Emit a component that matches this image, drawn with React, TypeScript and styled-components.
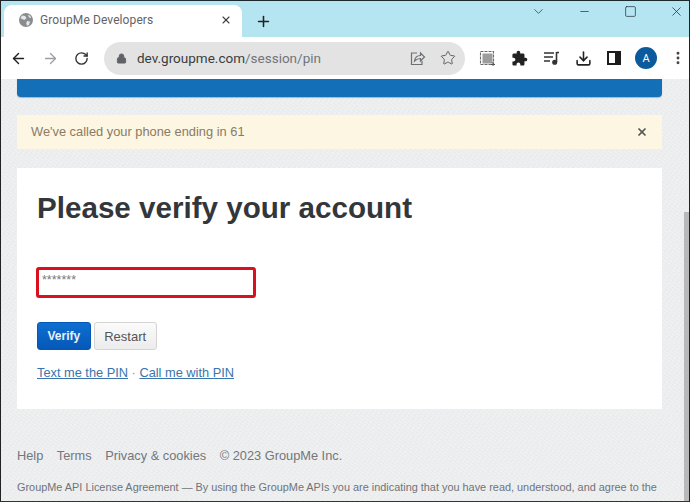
import React from "react";
import styled, { createGlobalStyle } from "styled-components";
import { ArrowLeft, ArrowRight, RotateCw, Lock, Star, Plus, X, Minus, ChevronDown, Square, Download, EllipsisVertical } from "lucide-react";

const Global = createGlobalStyle`
  html, body { margin: 0; padding: 0; height: 502px; overflow: hidden; }
  body { font-family: "Liberation Sans", Arial, sans-serif; }
  * { box-sizing: border-box; }
`;

const Frame = styled.div`
  width: 690px;
  height: 502px;
  display: flex;
  flex-direction: column;
  overflow: hidden;
  border-top: 1px solid #1c2a30;
  border-left: 1px solid #222;
  border-right: 1px solid #222;
  border-bottom: 1px solid #333;
`;

const TabStrip = styled.div`
  height: 36px;
  flex: none;
  background: #b5e5f0;
  display: flex;
  align-items: flex-end;
  padding-left: 3px;
  position: relative;
`;

const Tab = styled.div`
  width: 238px;
  height: 32px;
  background: #fff;
  border-radius: 8px 8px 0 0;
  display: flex;
  align-items: center;
  padding: 0 0 2px 15px;
  color: #5f6368;
  font: 12px "Roboto", "Liberation Sans", sans-serif;
`;

const TabTitle = styled.span`
  margin-left: 7px;
  flex: 1;
  letter-spacing: 0.1px;
`;

const TabClose = styled.span`
  display: flex;
  margin-right: 10px;
  color: #3c4043;
`;

const NewTab = styled.div`
  width: 20px;
  height: 32px;
  margin-left: 13px;
  display: flex;
  align-items: center;
  color: #202124;
`;

const WindowButtons = styled.div`
  position: absolute;
  top: 0;
  right: 5px;
  height: 20px;
  display: flex;
  align-items: center;
  gap: 30px;
  color: #2b3a40;
`;

const WindowButton = styled.div`
  width: 16px;
  display: flex;
  justify-content: center;
`;

const Toolbar = styled.div`
  height: 42px;
  flex: none;
  background: #fff;
  display: flex;
  align-items: center;
  padding-left: 9px;
  color: #3c4043;
`;

const NavIcons = styled.div`
  display: flex;
  align-items: center;
  gap: 15px;
  width: 94px;
`;

const Omnibox = styled.div`
  width: 361px;
  height: 33px;
  border-radius: 17px;
  background: #e3e3e4;
  display: flex;
  align-items: center;
  padding: 0 9px 0 12px;
  color: #5f6368;
`;

const Url = styled.div`
  flex: 1;
  margin-left: 10px;
  font: 13.5px "Roboto", "Liberation Sans", sans-serif;
  color: #70757a;
  b {
    font-weight: 400;
    color: #3a3d40;
  }
`;

const OmniIcons = styled.div`
  display: flex;
  align-items: center;
  gap: 14px;
`;

const ExtIcons = styled.div`
  display: flex;
  align-items: center;
  margin-left: 14px;
  gap: 15px;
  color: #222;
`;

const Avatar = styled.div`
  width: 22px;
  height: 22px;
  margin-left: -1px;
  margin-right: -2px;
  border-radius: 50%;
  background: #0b5a9e;
  color: #fff;
  font: 11px "Roboto", "Liberation Sans", sans-serif;
  display: flex;
  align-items: center;
  justify-content: center;
`;

const Viewport = styled.div`
  flex: 1;
  min-height: 0;
  display: flex;
  background-color: #ecedee;
  background-image: repeating-linear-gradient(37deg, rgba(255, 255, 255, 0.22) 0 1px, transparent 1px 3px),
    repeating-linear-gradient(-52deg, rgba(0, 0, 0, 0.012) 0 1px, transparent 1px 4px);
`;

const Page = styled.div`
  width: 677px;
  padding: 0 16px;
  display: flex;
  flex-direction: column;
`;

const Bar = styled.div`
  height: 18px;
  flex: none;
  background: #146fb9;
  border-radius: 0 0 4px 4px;
  box-shadow: 0 1px 1px rgba(0, 0, 0, 0.25);
`;

const Notice = styled.div`
  height: 34px;
  flex: none;
  margin-top: 18px;
  background: #fdf6e3;
  display: flex;
  align-items: center;
  justify-content: space-between;
  padding: 0 14px 1px;
  color: #8a7b64;
  font-size: 12.85px;
`;

const CloseMark = styled.span`
  color: #555;
  display: flex;
`;

const Card = styled.div`
  height: 241px;
  flex: none;
  margin-top: 19px;
  background: #fff;
  padding: 22px 20px 0;
`;

const Heading = styled.h1`
  margin: 0;
  font-size: 29.6px;
  line-height: 36px;
  font-weight: 700;
  color: #33373b;
`;

const PinInput = styled.div`
  width: 220px;
  height: 31px;
  margin: 41px 0 0 -1px;
  border: 3px solid #d9101f;
  border-radius: 3px;
  padding: 3px 0 0 3px;
  color: #777;
  font-size: 12.5px;
  line-height: 14px;
`;

const Buttons = styled.div`
  display: flex;
  gap: 3px;
  margin-top: 24px;
`;

const Button = styled.div<{ $primary?: boolean }>`
  height: 28px;
  padding: 0 9.5px;
  border-radius: 3px;
  display: flex;
  align-items: center;
  font-size: ${(p) => (p.$primary ? "12px" : "13px")};
  color: ${(p) => (p.$primary ? "#e8f1fb" : "#555")};
  font-weight: ${(p) => (p.$primary ? 700 : 400)};
  background: ${(p) => (p.$primary ? "linear-gradient(#0e6fd0, #0558b8)" : "linear-gradient(#fbfbfb, #ececec)")};
  border: 1px solid ${(p) => (p.$primary ? "#0558b8" : "#d4d4d4")};
`;

const Links = styled.div`
  margin-top: 15px;
  font-size: 12.8px;
  line-height: 16px;
  color: #8a9aa8;
`;

const PinLink = styled.a`
  color: #3a74ac;
  text-decoration: underline;
`;

const Footer = styled.div`
  margin-top: 39px;
  display: flex;
  gap: 13.5px;
  font-size: 12.8px;
  line-height: 16px;
  color: #72777c;
  white-space: nowrap;
`;

const License = styled.div`
  margin-top: 17px;
  font-size: 10.9px;
  line-height: 13px;
  color: #6f7479;
  white-space: nowrap;
`;

const Scrollbar = styled.div`
  flex: 1;
  padding: 133px 0 0 6px;
  display: flex;
`;

const Thumb = styled.div`
  flex: 1;
  background: #b9b9b9;
`;

const Globe = () => (
  <svg width="14" height="14" viewBox="0 0 14 14">
    <circle cx="7" cy="7" r="7" fill="#8a8d90" />
    <path d="M3 2.5l3 .5 1.5 2-2 2L3 6 1.5 5zM8 8l3 .5-1 3.5-2 .8-.8-2.5zM9 1.5l2.5 1.5.5 2-2-.5z" fill="#e6e7e8" />
  </svg>
);

const ShareIcon = () => (
  <svg width="17" height="17" viewBox="0 0 17 17" fill="none" stroke="#6d7074" strokeWidth="1.2">
    <path d="M8 3H2.5v11.5H13V11" />
    <path d="M5.5 11c.5-3.5 3-5.5 6-5.5V3l4 4-4 4V8.5c-2.5 0-4.5 1-6 2.5z" />
  </svg>
);

const ScreenshotIcon = () => (
  <svg width="17" height="17" viewBox="0 0 17 17" fill="none">
    <rect x="3.5" y="3.5" width="10" height="10" fill="#9c9c9c" />
    <rect x="1.5" y="1.5" width="13" height="13" stroke="#6a6a6a" strokeWidth="1.1" strokeDasharray="3 1" />
    <path d="M14 12v4M12 14.5h4" stroke="#555" strokeWidth="1" />
  </svg>
);

const PuzzleIcon = () => (
  <svg width="17" height="17" viewBox="0 0 24 24" fill="#222">
    <path d="M20.5 11H19V7c0-1.1-.9-2-2-2h-4V3.5C13 2.12 11.88 1 10.5 1S8 2.12 8 3.5V5H4c-1.1 0-1.99.9-1.99 2v3.8H3.5c1.49 0 2.7 1.21 2.7 2.7s-1.21 2.7-2.7 2.7H2V20c0 1.1.9 2 2 2h3.8v-1.5c0-1.49 1.21-2.7 2.7-2.7 1.49 0 2.7 1.21 2.7 2.7V22H17c1.1 0 2-.9 2-2v-4h1.5c1.38 0 2.5-1.12 2.5-2.5S21.88 11 20.5 11z" />
  </svg>
);

const QueueIcon = () => (
  <svg width="17" height="16" viewBox="0 0 17 16" fill="none" stroke="#333" strokeWidth="1.5">
    <path d="M1 3h10M1 7h9M1 11h6" />
    <path d="M13.5 2v10" strokeWidth="1.6" />
    <circle cx="11.7" cy="12.2" r="1.8" fill="#333" />
    <path d="M13.5 2.5h2.5" />
  </svg>
);

const SidePanelIcon = () => (
  <svg width="14" height="14" viewBox="0 0 14 14">
    <rect x="0" y="0" width="14" height="14" fill="#1c1c1c" />
    <rect x="2" y="2" width="6" height="10" fill="#fff" />
  </svg>
);

export default function App() {
  return (
    <Frame>
      <Global />
      <TabStrip>
        <Tab>
          <Globe />
          <TabTitle>GroupMe Developers</TabTitle>
          <TabClose>
            <X size={12} strokeWidth={2.2} />
          </TabClose>
        </Tab>
        <NewTab>
          <Plus size={17} strokeWidth={2.2} />
        </NewTab>
        <WindowButtons>
          <WindowButton>
            <ChevronDown size={15} strokeWidth={1.2} />
          </WindowButton>
          <WindowButton>
            <Minus size={13} strokeWidth={1.4} />
          </WindowButton>
          <WindowButton>
            <Square size={13} strokeWidth={1.4} />
          </WindowButton>
          <WindowButton>
            <X size={15} strokeWidth={1.3} />
          </WindowButton>
        </WindowButtons>
      </TabStrip>
      <Toolbar>
        <NavIcons>
          <ArrowLeft size={17} strokeWidth={2} color="#222" />
          <ArrowRight size={17} strokeWidth={1.8} color="#9a9ea2" />
          <RotateCw size={15} strokeWidth={2.2} color="#333" />
        </NavIcons>
        <Omnibox>
          <Lock size={11} fill="#5f6368" strokeWidth={2} />
          <Url>
            <b>dev.groupme.com</b>/session/pin
          </Url>
          <OmniIcons>
            <ShareIcon />
            <Star size={16} strokeWidth={1.5} />
          </OmniIcons>
        </Omnibox>
        <ExtIcons>
          <ScreenshotIcon />
          <PuzzleIcon />
          <QueueIcon />
          <Download size={17} strokeWidth={2.2} />
          <SidePanelIcon />
          <Avatar>A</Avatar>
          <EllipsisVertical size={16} strokeWidth={2.4} color="#444" />
        </ExtIcons>
      </Toolbar>
      <Viewport>
        <Page>
          <Bar />
          <Notice>
            <span>We've called your phone ending in 61</span>
            <CloseMark>
              <X size={12} strokeWidth={3.4} />
            </CloseMark>
          </Notice>
          <Card>
            <Heading>Please verify your account</Heading>
            <PinInput>*******</PinInput>
            <Buttons>
              <Button $primary>Verify</Button>
              <Button>Restart</Button>
            </Buttons>
            <Links>
              <PinLink>Text me the PIN</PinLink> · <PinLink>Call me with PIN</PinLink>
            </Links>
          </Card>
          <Footer>
            <span>Help</span>
            <span>Terms</span>
            <span>Privacy &amp; cookies</span>
            <span>© 2023 GroupMe Inc.</span>
          </Footer>
          <License>
            GroupMe API License Agreement — By using the GroupMe APIs you are indicating that you have read, understood, and agree to the
          </License>
        </Page>
        <Scrollbar>
          <Thumb />
        </Scrollbar>
      </Viewport>
    </Frame>
  );
}
